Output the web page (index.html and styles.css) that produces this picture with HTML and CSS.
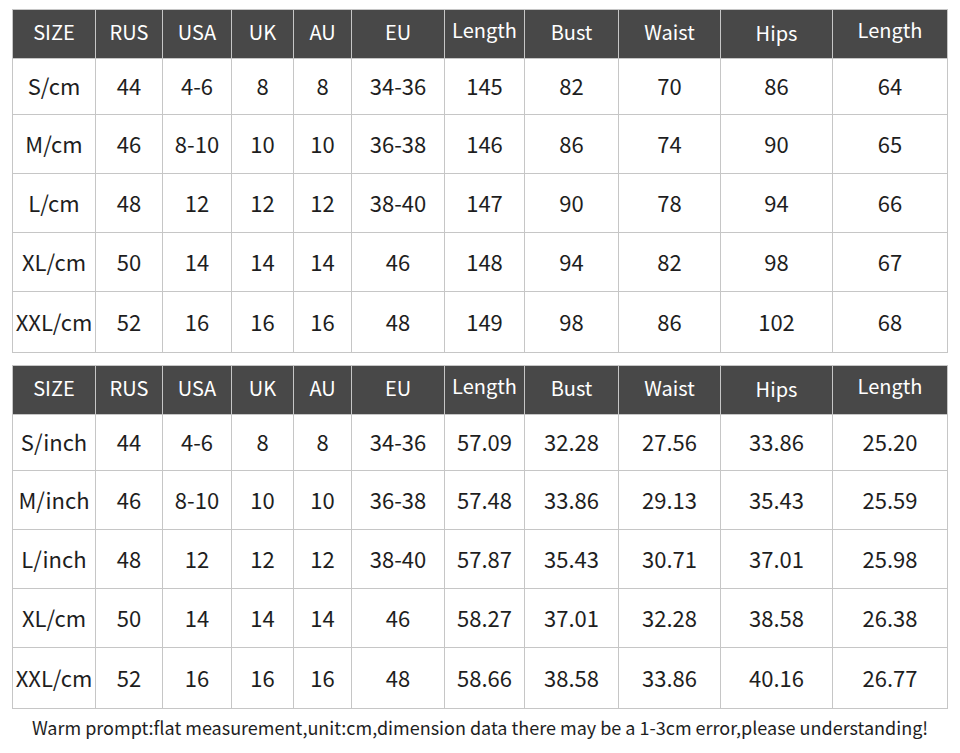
FILE: index.html
```html
<!DOCTYPE html>
<html>
<head>
<meta charset="utf-8">
<link rel="stylesheet" href="styles.css">
</head>
<body>
<div class="page">
<table class="chart first">
  <colgroup>
    <col class="c1"><col class="c2"><col class="c3"><col class="c4"><col class="c5"><col class="c6"><col class="c7"><col class="c8"><col class="c9"><col class="c10"><col class="c11">
  </colgroup>
  <thead>
    <tr><th>SIZE</th><th>RUS</th><th>USA</th><th>UK</th><th>AU</th><th>EU</th><th class="up">Length</th><th>Bust</th><th>Waist</th><th class="down">Hips</th><th class="up">Length</th></tr>
  </thead>
  <tbody>
    <tr class="r1"><td>S/cm</td><td>44</td><td>4-6</td><td>8</td><td>8</td><td>34-36</td><td>145</td><td>82</td><td>70</td><td>86</td><td>64</td></tr>
    <tr><td>M/cm</td><td>46</td><td>8-10</td><td>10</td><td>10</td><td>36-38</td><td>146</td><td>86</td><td>74</td><td>90</td><td>65</td></tr>
    <tr><td>L/cm</td><td>48</td><td>12</td><td>12</td><td>12</td><td>38-40</td><td>147</td><td>90</td><td>78</td><td>94</td><td>66</td></tr>
    <tr><td>XL/cm</td><td>50</td><td>14</td><td>14</td><td>14</td><td>46</td><td>148</td><td>94</td><td>82</td><td>98</td><td>67</td></tr>
    <tr class="rl"><td>XXL/cm</td><td>52</td><td>16</td><td>16</td><td>16</td><td>48</td><td>149</td><td>98</td><td>86</td><td>102</td><td>68</td></tr>
  </tbody>
</table>
<table class="chart second">
  <colgroup>
    <col class="c1"><col class="c2"><col class="c3"><col class="c4"><col class="c5"><col class="c6"><col class="c7"><col class="c8"><col class="c9"><col class="c10"><col class="c11">
  </colgroup>
  <thead>
    <tr><th>SIZE</th><th>RUS</th><th>USA</th><th>UK</th><th>AU</th><th>EU</th><th class="up">Length</th><th>Bust</th><th>Waist</th><th class="down">Hips</th><th class="up">Length</th></tr>
  </thead>
  <tbody>
    <tr class="r1"><td>S/inch</td><td>44</td><td>4-6</td><td>8</td><td>8</td><td>34-36</td><td>57.09</td><td>32.28</td><td>27.56</td><td>33.86</td><td>25.20</td></tr>
    <tr><td>M/inch</td><td>46</td><td>8-10</td><td>10</td><td>10</td><td>36-38</td><td>57.48</td><td>33.86</td><td>29.13</td><td>35.43</td><td>25.59</td></tr>
    <tr><td>L/inch</td><td>48</td><td>12</td><td>12</td><td>12</td><td>38-40</td><td>57.87</td><td>35.43</td><td>30.71</td><td>37.01</td><td>25.98</td></tr>
    <tr><td>XL/cm</td><td>50</td><td>14</td><td>14</td><td>14</td><td>46</td><td>58.27</td><td>37.01</td><td>32.28</td><td>38.58</td><td>26.38</td></tr>
    <tr class="rl"><td>XXL/cm</td><td>52</td><td>16</td><td>16</td><td>16</td><td>48</td><td>58.66</td><td>38.58</td><td>33.86</td><td>40.16</td><td>26.77</td></tr>
  </tbody>
</table>
<p class="note">Warm prompt:flat measurement,unit:cm,dimension data there may be a 1-3cm error,please understanding!</p>
</div>
</body>
</html>
```

FILE: styles.css
```css
html, body {
  margin: 0;
  padding: 0;
  background: #ffffff;
}
.page {
  padding: 9px 0 0 12px;
  width: 948px;
  font-family: "Noto Sans CJK SC", "Noto Sans", sans-serif;
  color: #1e1e1e;
}
.chart {
  border-collapse: collapse;
  table-layout: fixed;
  width: 936px;
}
.second {
  margin-top: 12px;
}
.c1 { width: 83px; }
.c2 { width: 67px; }
.c3 { width: 69px; }
.c4 { width: 62px; }
.c5 { width: 58px; }
.c6 { width: 93px; }
.c7 { width: 80px; }
.c8 { width: 94px; }
.c9 { width: 102px; }
.c10 { width: 112px; }
.c11 { width: 115px; }
.chart th,
.chart td {
  border: 1px solid #c6c6c6;
  padding: 0;
  text-align: center;
  vertical-align: middle;
  white-space: nowrap;
  font-weight: 400;
  line-height: 1;
}
.chart th {
  background: #484848;
  color: #ffffff;
  font-size: 20px;
  height: 40px;
  padding-bottom: 5px;
}
.chart th.up {
  padding-bottom: 8px;
}
.chart th.down {
  padding-bottom: 3px;
}
.chart td {
  font-size: 22px;
  height: 55px;
  padding-bottom: 3px;
}
.chart .r1 td {
  height: 52px;
}
.chart .rl td {
  height: 57px;
}
.note {
  margin: 6px 0 0 0;
  width: 936px;
  text-align: center;
  font-size: 18px;
  line-height: 24px;
  color: #1e1e1e;
}
```
